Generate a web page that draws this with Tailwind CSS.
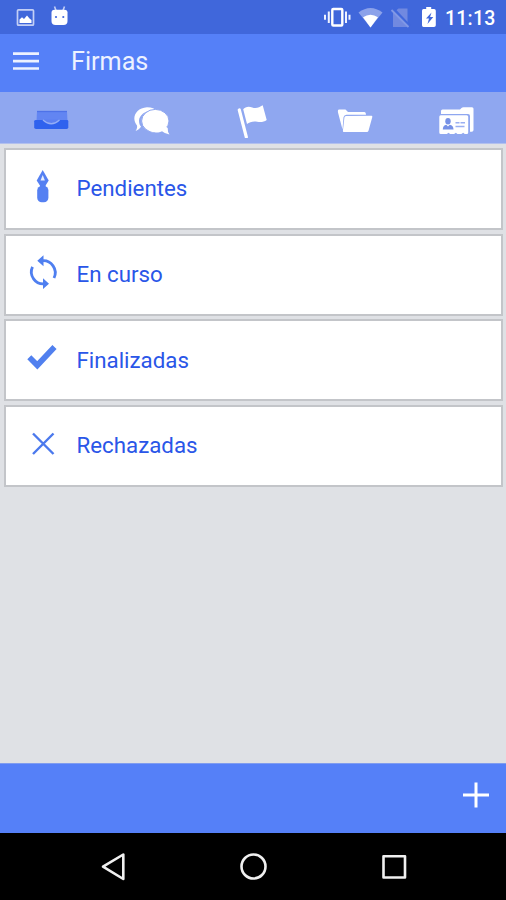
<!DOCTYPE html>
<html lang="es">
<head>
<meta charset="utf-8">
<title>Firmas</title>
<script src="https://cdn.jsdelivr.net/npm/@tailwindcss/browser@4"></script>
</head>
<body class="w-[506px] h-[900px] overflow-hidden bg-[#dfe1e5] font-['Roboto',sans-serif]">
<div class="flex flex-col h-[900px]">
  <header class="h-[34px] bg-[#4067db] flex items-center justify-between pl-[16px] pr-[11px] text-white">
    <div class="flex">
      <svg class="w-[54px] h-[34px]" viewBox="16 0 54 34">
        <rect x="17.500" y="9.800" width="16" height="15.400" rx="1" fill="none" stroke="#c3cff6" stroke-width="1.700"/>
        <path d="M19.500 23v-3.500l2.500-2.300 2 1.800 3-3.500 2.500 3 2 1.500v3z" fill="#fff"/>
        <path d="M54.500 6.500l1.500 4M64.500 6.500l-1.500 4" stroke="#c3cff6" stroke-width="1.600"/>
        <path d="M51.500 12.500q0-2.500 3-2.800h10q3 .3 3 2.800v8.500q0 4-4 4h-8q-4 0-4-4z" fill="#fff"/>
        <circle cx="56" cy="17" r="1.100" fill="#4067db"/><circle cx="63.300" cy="17" r="1.100" fill="#4067db"/>
      </svg>
    </div>
    <div class="flex items-center">
      <svg class="w-[120px] h-[34px]" viewBox="322 0 120 34">
        <rect x="332.300" y="9" width="10" height="16.500" rx="1" fill="none" stroke="#fff" stroke-width="2.400"/>
        <path d="M328.800 11.500v11.500M346 11.500v11.500M325 14.800v5M349.500 14.800v5" stroke="#eef2ff" stroke-width="2"/>
        <path d="M358.500 12.500Q370.500 3.500 382.500 12.500L370.500 27.500z" fill="#8ca2ea"/>
        <path d="M363 17.300Q370.500 12.300 378 17.300L370.500 27.500z" fill="#fff"/>
        <path d="M398.500 8.500h9v18.500H393V13z" fill="#7189e0"/>
        <path d="M392.500 8.500l17 18" stroke="#4067db" stroke-width="3.500"/>
        <path d="M391.500 10l17 17" stroke="#8299e6" stroke-width="1.800"/>
        <path d="M423.500 9h2.700V7h5v2h2.800q1.800 0 1.800 1.800v14.400q0 1.800-1.800 1.800h-10.500q-1.500 0-1.500-1.800V10.800q0-1.800 1.500-1.800z" fill="#fff"/>
        <path d="M431.500 12.500l-5.500 6h3l-1.500 5.500 5.800-7h-3.200z" fill="#4067db"/>
      </svg>
      <span class="w-[53px] text-[19.500px] font-medium tracking-[0.2px] whitespace-nowrap pt-[3px] pl-[3px] leading-[34px]">11:13</span>
    </div>
  </header>

  <div class="h-[58px] bg-[#5580f8] flex items-center text-[#edf2ff]">
    <svg class="w-[71px] h-[58px]" viewBox="0 34 71 58"><path d="M13 53.700h26M13 61.200h26M13 68.500h26" stroke="currentColor" stroke-width="2.700"/></svg>
    <h1 class="text-[25.200px] font-normal leading-[56px] pb-[3px]">Firmas</h1>
  </div>

  <nav class="h-[52px] bg-[#8fa7f0] grid grid-cols-5 items-center justify-items-center border-b border-[#b2c0ee]">
    <svg class="w-10 h-10" viewBox="31 98 40 40">
      <path d="M37 111.500h30l.5 10H36.500z" fill="#6285f2"/>
      <path d="M37 111.500h30" stroke="#4e72e8" stroke-width="1.300"/>
      <path d="M36 120h31q1.300 0 1.300 1.300v6q0 1.700-1.700 1.700H36q-1.800 0-1.800-1.700v-6q0-1.300 1.800-1.300z" fill="#2f62ee"/>
      <path d="M43.500 119.500h15.500q-7 7.500-15.500 0z" fill="#5d80f1"/>
      <path d="M43 120q8.300 7.500 16.500 0" fill="none" stroke="#94adf6" stroke-width="1.300"/>
    </svg>
    <svg class="w-10 h-10" viewBox="132 98 40 40" fill="#fff">
      <path d="M147 107.300c5 0 8 1.500 9 3-10-1-17 4.700-17 10.500 0 2.500.8 4.500 2 6-2 2.500-4 4-5.500 4.200 1.500-2 1.800-3.700 1.500-5.500-6-7-1.500-17.500 10-18.200z"/>
      <ellipse cx="155.300" cy="121" rx="13.700" ry="11.600" stroke="#8fa7f0" stroke-width="1"/>
      <path d="M149 130.500q7 3.500 13 .7 3 2.600 7.500 3.300-2-2.500-1.800-6.500l-4-3z"/>
    </svg>
    <svg class="w-10 h-10" viewBox="233 98 40 40" fill="#fff">
      <path d="M239.300 110l7 27" stroke="#fff" stroke-width="3.200" stroke-linecap="round"/>
      <path d="M243.200 109.200c2-2.700 6-3.200 9-1.700 4 1.500 7 0 10.500-2.200l4 14.700c-2.700 2-6 2.500-9.500 1.700-4-.8-7.500.2-10.200 2.300z"/>
    </svg>
    <svg class="w-10 h-10" viewBox="334 98 40 40" fill="#fff">
      <path d="M339 109.500h6.500l2.500 2.500h16.500q1.500 0 1.500 2.700h-19.500q-2.500 0-3 2.500l-1 12.300-4.500-17q-.5-3 1-3z"/>
      <path d="M346 116l25.500-.2q1 0 .8 1.200l-3.800 13.800q-.4 1.200-1.600 1.200h-23q-1.200 0-1-1.200l1.500-13.300q.2-1.500 1.600-1.500z"/>
    </svg>
    <svg class="w-10 h-10" viewBox="435 98 40 40" fill="#fff">
      <path d="M441 114v-3q0-1.500 1.500-1.500H460l1.500-1.500q.7-.8 2-.8h8.500q1.500 0 1.500 1.500V130q0 1.800-1.800 1.800H470V116q0-2-2-2z"/>
      <path d="M440.700 115.300h26q1.500 0 1.500 1.500v15.700q0 1.500-1.500 1.500h-2l-1.500-1.200-1.800 1.200h-4l-1.500-1.200-1.800 1.200h-4l-1.500-1.200-1.800 1.200h-6q-1.500 0-1.500-1.500v-15.700q0-1.500 1.400-1.500z"/>
      <g fill="#7791e6"><ellipse cx="448" cy="121.300" rx="2.700" ry="3.200"/><path d="M442.800 129.500q0-4 3.500-4.700l1.700 1.700 1.700-1.700q3.800.7 3.800 4.700z"/></g>
      <path d="M455.500 122.700h4M460.500 122.700h4.500M455.500 126.500h9" stroke="#9aaff2" stroke-width="1.600"/>
    </svg>
  </nav>

  <main class="flex-1 flex flex-col gap-[3.700px] pt-[4px] pl-[4px] pr-[3px] text-[#2a56e8] text-[22.300px]">
    <section class="h-[82px] bg-white border-2 border-[#c3c5c9] flex items-center">
      <svg class="w-[70.500px] h-[78px]" viewBox="6 150 70.500 78">
        <path d="M42.700 170l6 10.500-3.500 5.500h-5l-3.500-5.500z" fill="#5580f2"/><path d="M42.700 175l2.200 5.500h-4.400z" fill="#e8eeff"/>
        <rect x="37.200" y="186" width="11.200" height="16.200" rx="4.500" fill="#5580f2"/><path d="M40 184h5.500v4H40z" fill="#5580f2"/>
      </svg>
      <span>Pendientes</span>
    </section>
    <section class="h-[82px] bg-white border-2 border-[#c3c5c9] flex items-center">
      <svg class="w-[70.500px] h-[78px]" viewBox="6 236 70.500 78">
        <path d="M42 260.800a12 12 0 0 1 12 17.200M44.500 283.900a12 12 0 0 1-12-17" fill="none" stroke="#4f7ff0" stroke-width="2.800"/>
        <path d="M43.500 255.300v11l-6.200-5.500zM43 278.300v10.800l6-5.300z" fill="#4f7ff0"/>
      </svg>
      <span>En curso</span>
    </section>
    <section class="h-[82px] bg-white border-2 border-[#c3c5c9] flex items-center">
      <svg class="w-[70.500px] h-[78px]" viewBox="6 321 70.500 78"><path d="M29.300 357.300l8 8L54.500 347" fill="none" stroke="#5180ef" stroke-width="5.700"/></svg>
      <span class="pt-[1px]">Finalizadas</span>
    </section>
    <section class="h-[82px] bg-white border-2 border-[#c3c5c9] flex items-center">
      <svg class="w-[70.500px] h-[78px]" viewBox="6 407 70.500 78"><path d="M33 433.500L53.500 454M53.500 433.500L33 454" stroke="#4b79ed" stroke-width="2.400"/></svg>
      <span>Rechazadas</span>
    </section>
  </main>

  <footer class="h-[70px] bg-[#5580f8] flex justify-end border-t border-[#7f9cf0]">
    <svg class="w-[86px] h-[69px]" viewBox="420 764 86 69"><path d="M463 795h26M476 782.500v25" stroke="#fff" stroke-width="3"/></svg>
  </footer>
  <div class="h-[67px] bg-black flex justify-center">
    <svg class="w-[506px] h-[67px]" viewBox="0 833 506 67" fill="none" stroke="#f0f0f0" stroke-width="2.600" stroke-linejoin="round">
      <path d="M103 866.700L123.300 854.500v24.500z"/><circle cx="253.500" cy="866.500" r="12"/><rect x="383.500" y="856.200" width="21.500" height="21.300"/>
    </svg>
  </div>
</div>
</body>
</html>
